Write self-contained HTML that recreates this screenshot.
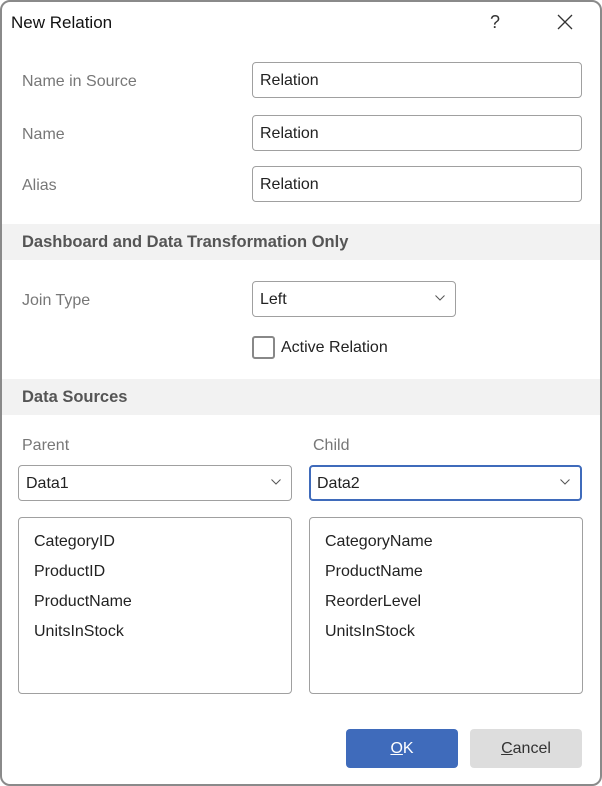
<!DOCTYPE html>
<html><head><style>
*{box-sizing:border-box;margin:0;padding:0}
body{width:602px;height:786px;background:#fff;font-family:"Liberation Sans",Arial,sans-serif;font-size:16px;color:#222;position:relative;overflow:hidden}
.frame{position:absolute;left:0;top:0;width:602px;height:786px;border:2px solid #8a8a8a;border-radius:10px}
.a{position:absolute}
.lbl{color:#777}
.inp{position:absolute;border:1px solid #a0a0a0;border-radius:4px;padding-left:7px;padding-top:2px;display:flex;align-items:center}
.band{position:absolute;left:2px;width:598px;height:36px;background:#f2f2f2;font-weight:bold;color:#555;padding-left:20px;line-height:36px;font-size:16.5px}
.chev{position:absolute;right:10px;top:50%;margin-top:-4px}
.list{position:absolute;border:1px solid #a0a0a0;border-radius:4px;padding:9px 0 0 15px;line-height:30px}
.btn{position:absolute;top:729px;height:39px;width:112px;border-radius:4px;text-align:center;line-height:39px}
</style></head><body>
<div class="frame"></div>
<div class="a" style="left:11px;top:13px;font-size:17px;color:#111">New Relation</div>
<div class="a" style="left:490px;top:12px;font-size:18px;color:#333">?</div>
<svg class="a" style="left:557px;top:14px" width="16" height="16"><path d="M1 1L15 15M15 1L1 15" stroke="#333" stroke-width="1.3"/></svg>

<div class="a lbl" style="left:22px;top:73px">Name in Source</div>
<div class="inp" style="left:252px;top:62px;width:330px;height:36px">Relation</div>
<div class="a lbl" style="left:22px;top:126px">Name</div>
<div class="inp" style="left:252px;top:115px;width:330px;height:36px">Relation</div>
<div class="a lbl" style="left:22px;top:177px">Alias</div>
<div class="inp" style="left:252px;top:166px;width:330px;height:36px">Relation</div>

<div class="band" style="top:224px">Dashboard and Data Transformation Only</div>

<div class="a lbl" style="left:22px;top:292px">Join Type</div>
<div class="inp" style="left:252px;top:281px;width:204px;height:36px">Left<svg class="chev" width="10" height="6"><path d="M0.5 0.5L5 5L9.5 0.5" stroke="#555" fill="none"/></svg></div>
<div class="a" style="left:252px;top:336px;width:23px;height:23px;border:2px solid #888;border-radius:3px"></div>
<div class="a" style="left:281px;top:339px">Active Relation</div>

<div class="band" style="top:379px">Data Sources</div>

<div class="a lbl" style="left:22px;top:437px">Parent</div>
<div class="a lbl" style="left:313px;top:437px">Child</div>
<div class="inp" style="left:18px;top:465px;width:274px;height:36px">Data1<svg class="chev" width="10" height="6"><path d="M0.5 0.5L5 5L9.5 0.5" stroke="#555" fill="none"/></svg></div>
<div class="inp" style="left:309px;top:465px;width:273px;height:36px;border:2px solid #3f6bbb;padding-left:6px">Data2<svg class="chev" width="10" height="6"><path d="M0.5 0.5L5 5L9.5 0.5" stroke="#555" fill="none"/></svg></div>

<div class="list" style="left:18px;top:517px;width:274px;height:177px">CategoryID<br>ProductID<br>ProductName<br>UnitsInStock</div>
<div class="list" style="left:309px;top:517px;width:274px;height:177px">CategoryName<br>ProductName<br>ReorderLevel<br>UnitsInStock</div>

<div class="btn" style="left:346px;background:#3f6bbb;color:#fff"><u>O</u>K</div>
<div class="btn" style="left:470px;background:#dddddd;color:#333"><u>C</u>ancel</div>
</body></html>
